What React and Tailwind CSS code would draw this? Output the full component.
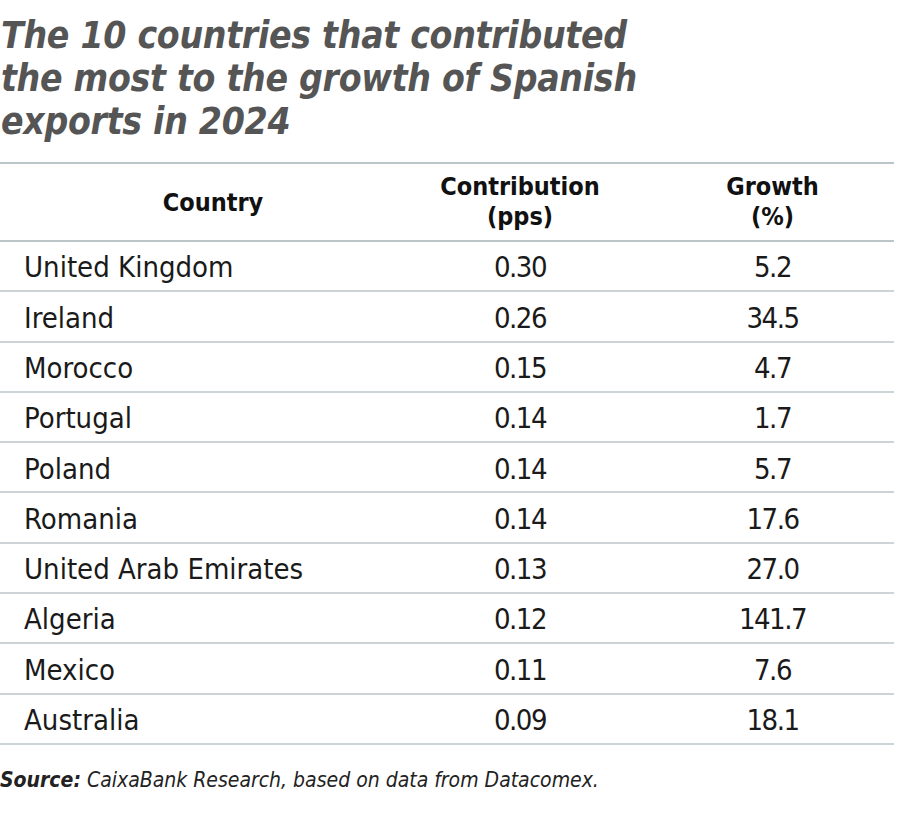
const ROWS = [
  ['United Kingdom', '0.30', '5.2'],
  ['Ireland', '0.26', '34.5'],
  ['Morocco', '0.15', '4.7'],
  ['Portugal', '0.14', '1.7'],
  ['Poland', '0.14', '5.7'],
  ['Romania', '0.14', '17.6'],
  ['United Arab Emirates', '0.13', '27.0'],
  ['Algeria', '0.12', '141.7'],
  ['Mexico', '0.11', '7.6'],
  ['Australia', '0.09', '18.1'],
]

const FONT = "font-['DejaVu_Sans_Condensed','Liberation_Sans',sans-serif]"

export default function App() {
  return (
    <div className={`w-[900px] h-[832px] bg-white ${FONT}`}>
      <h1 className="pt-[14px] pl-[1px] text-[37px] leading-[43px] tracking-[-0.3px] font-bold italic text-[#555555] w-[660px]">
        The 10 countries that contributed the most to the growth of Spanish exports in 2024
      </h1>

      <div className="mt-[19px] w-[894px] border-t-2 border-[#bcc6ca]">
        {/* header */}
        <div className="grid grid-cols-[416px_208px_1fr] h-[78px] items-center border-b-2 border-[#bcc6ca] text-[25px] leading-[30px] font-bold text-[#111]">
          <div className="text-center pl-[10px] pt-[2px]">Country</div>
          <div className="text-center">Contribution<br />(pps)</div>
          <div className="text-center pl-[27px]">Growth<br />(%)</div>
        </div>

        {ROWS.map(([c, v, g]) => (
          <div key={c} className="grid grid-cols-[416px_208px_1fr] h-[50.3px] pt-[4px] items-center border-b-2 border-[#cdd4d7] text-[29px] text-[#1a1a1a]">
            <div className="pl-[24px]">{c}</div>
            <div className="text-center tracking-[-1.5px]">{v}</div>
            <div className="text-center pl-[27px] tracking-[-1.5px]">{g}</div>
          </div>
        ))}
      </div>

      <p className="mt-[20px] text-[21px] italic text-[#222]">
        <span className="font-bold">Source:</span> CaixaBank Research, based on data from Datacomex.
      </p>
    </div>
  )
}
